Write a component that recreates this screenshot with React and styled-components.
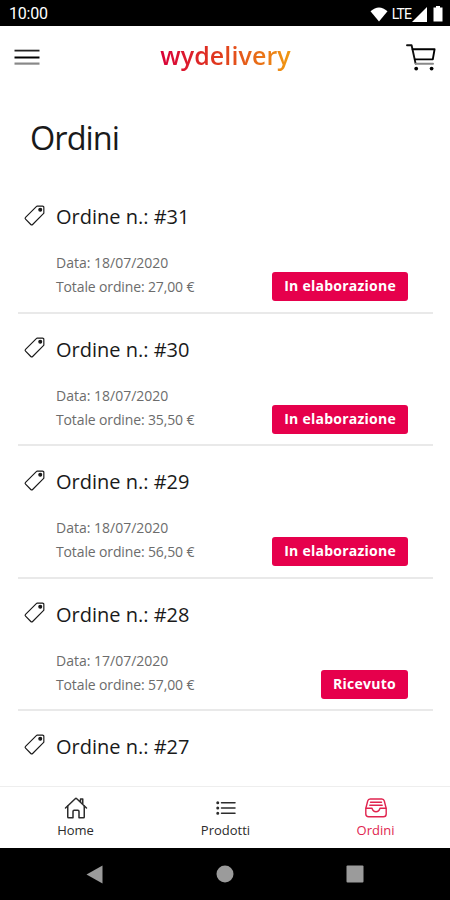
import React from 'react';
import styled, { createGlobalStyle } from 'styled-components';
import { IoHomeOutline, IoListOutline, IoPricetagOutline } from 'react-icons/io5';

const orders = [
  { number: 31, date: '18/07/2020', total: '27,00', status: 'In elaborazione' },
  { number: 30, date: '18/07/2020', total: '35,50', status: 'In elaborazione' },
  { number: 29, date: '18/07/2020', total: '56,50', status: 'In elaborazione' },
  { number: 28, date: '17/07/2020', total: '57,00', status: 'Ricevuto' },
  { number: 27 },
];

const CartIcon = () => (
  <svg width="30" height="28" viewBox="0 0 30 28" fill="none" strokeLinecap="round" strokeLinejoin="round">
    <path d="M1 2.2H5.6L9.6 20.6" stroke="#111" strokeWidth="1.9" />
    <path d="M6.6 6.2H28.6L26.8 16.4H9" stroke="#000" strokeWidth="1.9" />
    <path d="M9.8 20.8H27" stroke="#888" strokeWidth="2" />
    <circle cx="10.2" cy="25.6" r="1.9" fill="#000" />
    <circle cx="25.6" cy="25.6" r="1.9" fill="#000" />
  </svg>
);

const TrayIcon = () => (
  <svg width="24" height="24" viewBox="0 0 24 24" fill="none" stroke="currentColor" strokeWidth="1.4" strokeLinecap="round" strokeLinejoin="round">
    <path d="M1.8 12.5L3.7 5Q4.2 3 6.2 3H17.8Q19.8 3 20.3 5L22.2 12.5V18Q22.2 20.8 19.4 20.8H4.6Q1.8 20.8 1.8 18Z" />
    <path d="M2 12.3H8Q9 15.8 12 15.8Q15 15.8 16 12.3H22" />
    <path d="M6.5 6.3H17.5M5.8 9.3H18.2" />
  </svg>
);

const App = () => {
  return (
    <Screen>
      <GlobalStyle />
      <StatusBar>
        <Clock>10:00</Clock>
        <StatusIcons>
          <svg width="18" height="15" viewBox="0 0 18 15">
            <path d="M0.5 4.2 Q9 -3.4 17.5 4.2 L9 14.5 Z" fill="#fff" />
          </svg>
          <Network>LTE</Network>
          <svg width="15" height="15" viewBox="0 0 15 15">
            <path d="M15 0V15H0Z" fill="#fff" />
          </svg>
          <Battery width="10" height="16" viewBox="0 0 10 16">
            <path d="M3 0h4v1.5h2.5v14H0.5v-14H3Z" fill="#fff" />
          </Battery>
        </StatusIcons>
      </StatusBar>
      <Header>
        <MenuButton>
          <svg width="26" height="18" viewBox="0 0 26 18" fill="none">
            <path d="M0.5 2.6H25.5" stroke="#222" strokeWidth="1.8" />
            <path d="M0.5 9.5H25.5" stroke="#000" strokeWidth="2" />
            <path d="M0.5 15.6H25.5" stroke="#888" strokeWidth="2.2" />
          </svg>
        </MenuButton>
        <Logo>wydelivery</Logo>
        <CartButton>
          <CartIcon />
        </CartButton>
      </Header>
      <Content>
        <Title>Ordini</Title>
        {orders.map((order) => (
          <Order key={order.number}>
            <OrderHead>
              <IoPricetagOutline size={23} />
              <OrderName>Ordine n.: #{order.number}</OrderName>
            </OrderHead>
            {order.status && (
              <OrderBody>
                <Details>
                  <Detail $spacing={0}>Data: {order.date}</Detail>
                  <Detail $spacing={-0.13}>Totale ordine: {order.total} €</Detail>
                </Details>
                <Badge>{order.status}</Badge>
              </OrderBody>
            )}
          </Order>
        ))}
      </Content>
      <Tabs>
        <Tab>
          <IoHomeOutline size={24} />
          <TabLabel>Home</TabLabel>
        </Tab>
        <Tab>
          <IoListOutline size={24} />
          <TabLabel>Prodotti</TabLabel>
        </Tab>
        <Tab $active>
          <TrayIcon />
          <TabLabel>Ordini</TabLabel>
        </Tab>
      </Tabs>
      <SystemBar>
        <svg width="17" height="19" viewBox="0 0 17 19">
          <path d="M16.5 0.5V18.5L0.5 9.5Z" fill="#9b9b9b" />
        </svg>
        <svg width="18" height="18" viewBox="0 0 18 18">
          <circle cx="9" cy="9" r="8.5" fill="#9b9b9b" />
        </svg>
        <svg width="18" height="18" viewBox="0 0 18 18">
          <rect x="0.5" y="0.5" width="17" height="17" rx="1" fill="#9b9b9b" />
        </svg>
      </SystemBar>
    </Screen>
  );
};

const GlobalStyle = createGlobalStyle`
  * {
    box-sizing: border-box;
  }

  body {
    margin: 0;
    background: #ffffff;
  }

  svg {
    display: block;
    flex: none;
  }
`;

const Screen = styled.div`
  width: 450px;
  height: 900px;
  display: flex;
  flex-direction: column;
  overflow: hidden;
  background: #ffffff;
  color: #1a1a1a;
  font-family: "Open Sans", "Noto Sans", sans-serif;
`;

const StatusBar = styled.div`
  height: 26px;
  flex: none;
  display: flex;
  align-items: center;
  justify-content: space-between;
  padding: 2px 7px 0 9px;
  background: #000000;
  color: #ffffff;
  font-family: Roboto, sans-serif;
`;

const Clock = styled.span`
  font-size: 16px;
  line-height: 20px;
  letter-spacing: -0.2px;
`;

const StatusIcons = styled.div`
  display: flex;
  align-items: center;
`;

const Network = styled.span`
  margin: 0 1px 0 4px;
  font-size: 14px;
  line-height: 18px;
  letter-spacing: -0.9px;
`;

const Battery = styled.svg`
  margin-left: 6px;
`;

const Header = styled.header`
  height: 62px;
  flex: none;
  display: grid;
  grid-template-columns: 60px 1fr 60px;
  align-items: center;
  justify-items: center;
`;

const MenuButton = styled.div`
  justify-self: start;
  padding-left: 14px;
`;

const Logo = styled.div`
  margin: 0 0 5px 1px;
  font-size: 25px;
  font-weight: 600;
  line-height: 34px;
  letter-spacing: 0.1px;
  white-space: nowrap;
  color: transparent;
  background: linear-gradient(90deg, #d90039 0%, #e03a1d 45%, #f09a12 100%);
  background-clip: text;
`;

const CartButton = styled.div`
  justify-self: end;
  padding-right: 14px;
`;

const Content = styled.main`
  flex: 1;
  min-height: 0;
  overflow: hidden;
  padding: 0 17px 0 18px;
`;

const Title = styled.h1`
  height: 93.4px;
  margin: 0;
  padding: 28px 0 0 12px;
  font-size: 32.5px;
  font-weight: 400;
  line-height: 44px;
  letter-spacing: -0.95px;
`;

const Order = styled.article`
  height: 132.4px;
  padding: 22px 25px 0 6px;
  border-bottom: 2px solid #e9e9e9;
`;

const OrderHead = styled.div`
  height: 28px;
  display: flex;
  align-items: center;
  gap: 9px;

  svg {
    margin: 0 1px 4px -1px;
  }

  path {
    stroke-width: 26px;
  }
`;

const OrderName = styled.h2`
  margin: 0;
  font-size: 20px;
  font-weight: 400;
  line-height: 28px;
`;

const OrderBody = styled.div`
  display: flex;
  justify-content: space-between;
  align-items: flex-end;
  padding: 20px 0 0 32px;
`;

const Details = styled.div`
  padding-bottom: 2px;
`;

const Detail = styled.p`
  margin: 0;
  font-size: 14px;
  line-height: 24px;
  letter-spacing: ${({ $spacing }) => $spacing}px;
  color: #6c6c6c;
`;

const Badge = styled.span`
  height: 29px;
  padding: 0 12px;
  border-radius: 3px;
  background: #e6004c;
  color: #ffffff;
  font-size: 14px;
  font-weight: 700;
  line-height: 28px;
  letter-spacing: 0.25px;
  white-space: nowrap;
`;

const Tabs = styled.nav`
  height: 62px;
  flex: none;
  display: grid;
  grid-template-columns: repeat(3, 1fr);
  border-top: 1px solid #eeeeee;
  background: #ffffff;
`;

const Tab = styled.div`
  display: flex;
  flex-direction: column;
  align-items: center;
  padding: 9px 0 0 1px;
  color: ${({ $active }) => ($active ? '#e0244f' : '#2c2c2c')};
`;

const TabLabel = styled.span`
  font-size: 13px;
  line-height: 21px;
`;

const SystemBar = styled.footer`
  height: 52px;
  flex: none;
  display: flex;
  align-items: center;
  justify-content: space-between;
  padding: 0 86px;
  background: #000000;
`;

export default App;
